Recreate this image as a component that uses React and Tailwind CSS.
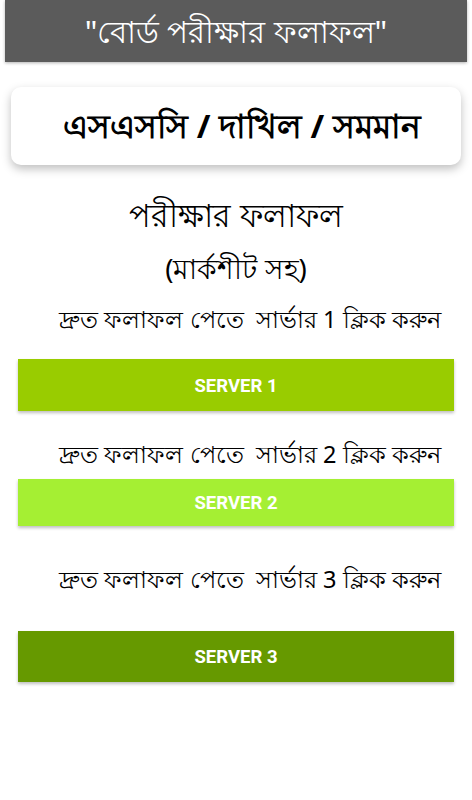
function Line({ n, mt }) {
  return (
    <div className={`font-['Noto_Sans',sans-serif] text-[23.5px] leading-[30px] text-black text-center pl-[28px] ${mt}`}>
      দ্রুত ফলাফল পেতে&nbsp; সার্ভার {n} ক্লিক করুন
    </div>
  );
}

function Btn({ label, color, h, mt }) {
  return (
    <div
      className={`mx-[18px] pt-[3px] flex items-center justify-center text-white font-bold text-[18.5px] font-['Roboto','Liberation_Sans',sans-serif] shadow-[0_2px_3px_rgba(0,0,0,0.25)] ${color} ${h} ${mt}`}
    >
      {label}
    </div>
  );
}

export default function App() {
  return (
    <div className="w-[472px] h-[800px] bg-white overflow-hidden flex flex-col">
      <div className="mx-[5px] h-[62px] bg-[#5b5b5b] flex items-center justify-center shadow-[0_1px_3px_rgba(0,0,0,0.3)]">
        <span className="text-white text-[31px] font-['Noto_Sans',sans-serif]">"বোর্ড পরীক্ষার ফলাফল"</span>
      </div>
      <div className="mx-[11px] mt-[25px] h-[78px] bg-white rounded-[10px] shadow-[0_4px_10px_rgba(0,0,0,0.25)] flex items-center justify-center pl-[12px]">
        <span className="text-black font-bold text-[33px] font-['Noto_Sans',sans-serif]">এসএসসি / দাখিল / সমমান</span>
      </div>
      <div className="mt-[30px] text-center text-[32px] leading-[40px] text-black font-['Noto_Sans',sans-serif]">পরীক্ষার ফলাফল</div>
      <div className="mt-[17px] text-center text-[27.5px] leading-[34px] text-black font-['Noto_Sans',sans-serif]">(মার্কশীট সহ)</div>
      <Line n="1" mt="mt-[18px]" />
      <Btn label="SERVER 1" color="bg-[#99cc00]" h="h-[52px]" mt="mt-[25px]" />
      <Line n="2" mt="mt-[28px]" />
      <Btn label="SERVER 2" color="bg-[#a5ef33]" h="h-[47px]" mt="mt-[10px]" />
      <Line n="3" mt="mt-[38px]" />
      <Btn label="SERVER 3" color="bg-[#669900]" h="h-[51px]" mt="mt-[37px]" />
    </div>
  );
}
